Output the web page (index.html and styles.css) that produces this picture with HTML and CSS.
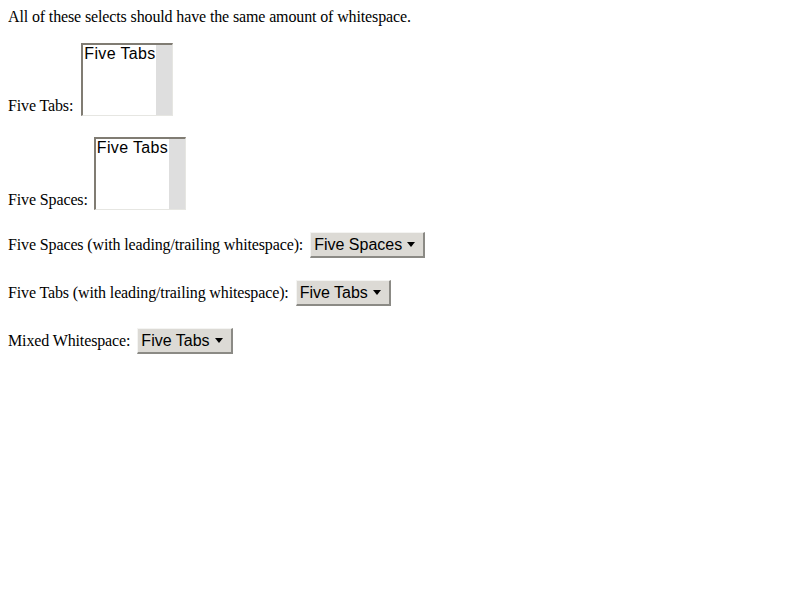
FILE: index.html
```html
<!DOCTYPE html>
<html>
<head>
<meta charset="utf-8">
<link rel="stylesheet" href="styles.css">
</head>
<body>
<p class="intro">All of these selects should have the same amount of whitespace.</p>
<div class="row row-list first">
  <span class="label">Five Tabs:</span>
  <div class="listbox"><div class="options"><div class="option">Five Tabs</div></div><div class="scroll"></div></div>
</div>
<div class="row row-list second">
  <span class="label">Five Spaces:</span>
  <div class="listbox"><div class="options"><div class="option">Five Tabs</div></div><div class="scroll"></div></div>
</div>
<div class="row row-drop">
  <span class="label">Five Spaces (with leading/trailing whitespace):</span>
  <div class="dropdown"><span class="dtext">Five Spaces</span><span class="arrow"></span></div>
</div>
<div class="row row-drop">
  <span class="label">Five Tabs (with leading/trailing whitespace):</span>
  <div class="dropdown"><span class="dtext">Five Tabs</span><span class="arrow"></span></div>
</div>
<div class="row row-drop">
  <span class="label">Mixed Whitespace:</span>
  <div class="dropdown"><span class="dtext">Five Tabs</span><span class="arrow"></span></div>
</div>
</body>
</html>
```
FILE: styles.css
```css
html, body {
  background: #ffffff;
}
body {
  margin: 8px;
  font-family: "Liberation Serif", serif;
  font-size: 16px;
  line-height: 18px;
  letter-spacing: -0.13px;
  color: #000000;
}
.intro {
  margin: 0;
  height: 18px;
}
.row {
  display: flex;
}
.row-list {
  align-items: flex-end;
}
.row-list.first {
  margin-top: 17px;
}
.row-list.second {
  margin-top: 21px;
}
.row-list .label {
  margin-bottom: 1px;
}
.listbox {
  box-sizing: border-box;
  width: 92px;
  height: 73px;
  margin-left: 7px;
  border-style: solid;
  border-width: 2px 1px 1px 2px;
  border-color: #807c73 #e6e6e2 #e6e6e2 #807c73;
  display: flex;
  background: #ffffff;
}
.first .listbox {
  margin-left: 8px;
}
.second .listbox {
  margin-left: 6px;
}
.options {
  flex: 1;
  font-family: "Liberation Sans", Arial, sans-serif;
  font-size: 16px;
  line-height: 18px;
  letter-spacing: 0.35px;
  padding-left: 1px;
}
.option {
  white-space: nowrap;
}
.scroll {
  width: 16px;
  background: #dedede;
}
.row-drop {
  align-items: center;
  margin-top: 22px;
}
.dropdown {
  box-sizing: border-box;
  height: 26px;
  margin-left: 7px;
  display: flex;
  align-items: center;
  padding: 0 8px 0 3px;
  background: #dcdad5;
  border-style: solid;
  border-width: 1px 2px 2px 1px;
  border-color: #f4f4f2 #8b8a85 #8b8a85 #f4f4f2;
  font-family: "Liberation Sans", Arial, sans-serif;
  font-size: 16px;
  line-height: 18px;
  letter-spacing: 0;
}
.dtext {
  white-space: nowrap;
}
.arrow {
  width: 0;
  height: 0;
  margin-left: 5px;
  margin-top: -1px;
  border-left: 4.5px solid transparent;
  border-right: 4.5px solid transparent;
  border-top: 5px solid #000000;
}
```
